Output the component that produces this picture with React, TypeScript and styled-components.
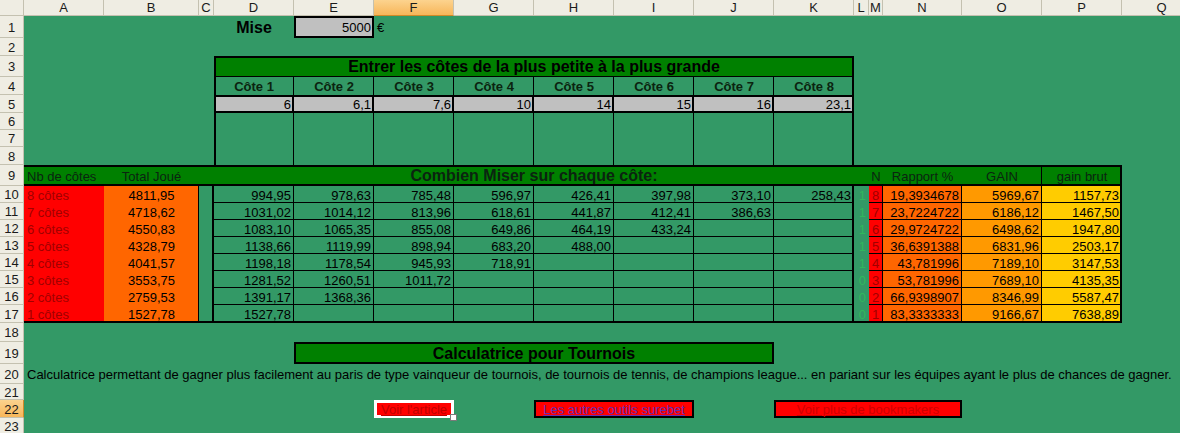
import React from 'react';
import styled, { createGlobalStyle } from 'styled-components';

const Global = createGlobalStyle`
  html, body { margin: 0; padding: 0; background: #339966; overflow: hidden; }
  body { font-family: "Liberation Sans", Arial, sans-serif; }
`;

const LETTERS = ['A','B','C','D','E','F','G','H','I','J','K','L','M','N','O','P','Q'];
const COL_W = [80, 95, 15, 80, 80, 80, 80, 80, 80, 80, 80, 15, 14, 79, 80, 80, 80];
const ROW_H = [22, 18, 21, 18, 18, 17, 17, 18, 21, 17, 17, 17, 17, 17, 17, 17, 18, 19, 22, 20, 16, 18, 17];

const colIdx = (l: string) => LETTERS.indexOf(l) + 2;

const Sheet = styled.div`
  display: grid;
  grid-template-columns: 24px ${COL_W.map((w) => `${w}px`).join(' ')};
  grid-template-rows: 16px ${ROW_H.map((h) => `${h}px`).join(' ')};
  width: 1180px;
  height: 433px;
  overflow: hidden;
  background: #339966;
`;

const HeadBase = styled.div<{ $active?: boolean }>`
  box-sizing: border-box;
  display: flex;
  align-items: center;
  justify-content: center;
  font-size: 13px;
  color: #1a1a1a;
  background: ${(p) => (p.$active ? 'linear-gradient(#fcd38e, #f7b65a)' : '#efede3')};
  border-right: 1px solid #c4c1b0;
  border-bottom: 1px solid #c4c1b0;
`;

const Corner = styled(HeadBase)`
  grid-column: 1;
  grid-row: 1;
`;

const ColHead = styled(HeadBase)<{ $col: number }>`
  grid-column: ${(p) => p.$col};
  grid-row: 1;
  border-bottom-color: ${(p) => (p.$active ? '#d08a28' : '#c4c1b0')};
`;

const RowHead = styled(HeadBase)<{ $row: number }>`
  grid-column: 1;
  grid-row: ${(p) => p.$row + 1};
  border-right-color: ${(p) => (p.$active ? '#d08a28' : '#c4c1b0')};
  padding-top: 1px;
`;

type CellProps = {
  $c: string;
  $ce?: string;
  $r: number;
  $re?: number;
  $bg?: string;
  $align?: 'left' | 'center' | 'right';
  $bold?: boolean;
  $size?: number;
  $color?: string;
  $b?: [number, number, number, number];
  $bc?: string;
  $u?: boolean;
};

const shadow = (b: [number, number, number, number] | undefined, c: string) => {
  if (!b) return 'none';
  const [t, r, bo, l] = b;
  const parts: string[] = [];
  if (t) parts.push(`inset 0 ${t}px 0 ${c}`);
  if (r) parts.push(`inset -${r}px 0 0 ${c}`);
  if (bo) parts.push(`inset 0 -${bo}px 0 ${c}`);
  if (l) parts.push(`inset ${l}px 0 0 ${c}`);
  return parts.length ? parts.join(', ') : 'none';
};

const Cell = styled.div<CellProps>`
  position: relative;
  box-sizing: border-box;
  grid-column: ${(p) => colIdx(p.$c)} / ${(p) => colIdx(p.$ce ?? p.$c) + 1};
  grid-row: ${(p) => p.$r + 1} / ${(p) => (p.$re ?? p.$r) + 2};
  display: flex;
  align-items: center;
  justify-content: ${(p) =>
    p.$align === 'right' ? 'flex-end' : p.$align === 'center' ? 'center' : 'flex-start'};
  padding: 1px 3px 0 3px;
  background: ${(p) => p.$bg ?? 'transparent'};
  box-shadow: ${(p) => shadow(p.$b, p.$bc ?? '#000')};
  font-size: ${(p) => p.$size ?? 13}px;
  font-weight: ${(p) => (p.$bold ? 700 : 400)};
  color: ${(p) => p.$color ?? '#000'};
  text-decoration: ${(p) => (p.$u ? 'underline' : 'none')};
  white-space: nowrap;
  overflow: visible;
  line-height: 1;
`;

const FillHandle = styled.span`
  position: absolute;
  right: -3px;
  bottom: -3px;
  width: 5px;
  height: 5px;
  background: #ffffff;
  border: 1px solid #7a7a7a;
`;

const GREEN = '#339966';
const DARK = '#008000';
const RED = '#ff0000';
const ORANGE = '#ff6600';
const AMBER = '#ff9900';
const YELLOW = '#ffcc00';
const GRAY = '#c0c0c0';
const DARKRED = '#a00000';
const HEAD_TXT = '#0b2410';

const cotes = ['6', '6,1', '7,6', '10', '14', '15', '16', '23,1'];
const dk = ['D', 'E', 'F', 'G', 'H', 'I', 'J', 'K'];

const rows = [
  { n: '8', tot: '4811,95', v: ['994,95', '978,63', '785,48', '596,97', '426,41', '397,98', '373,10', '258,43'], l: '1', rap: '19,3934678', gain: '5969,67', brut: '1157,73' },
  { n: '7', tot: '4718,62', v: ['1031,02', '1014,12', '813,96', '618,61', '441,87', '412,41', '386,63'], l: '1', rap: '23,7224722', gain: '6186,12', brut: '1467,50' },
  { n: '6', tot: '4550,83', v: ['1083,10', '1065,35', '855,08', '649,86', '464,19', '433,24'], l: '1', rap: '29,9724722', gain: '6498,62', brut: '1947,80' },
  { n: '5', tot: '4328,79', v: ['1138,66', '1119,99', '898,94', '683,20', '488,00'], l: '1', rap: '36,6391388', gain: '6831,96', brut: '2503,17' },
  { n: '4', tot: '4041,57', v: ['1198,18', '1178,54', '945,93', '718,91'], l: '1', rap: '43,781996', gain: '7189,10', brut: '3147,53' },
  { n: '3', tot: '3553,75', v: ['1281,52', '1260,51', '1011,72'], l: '0', rap: '53,781996', gain: '7689,10', brut: '4135,35' },
  { n: '2', tot: '2759,53', v: ['1391,17', '1368,36'], l: '0', rap: '66,9398907', gain: '8346,99', brut: '5587,47' },
  { n: '1', tot: '1527,78', v: ['1527,78'], l: '0', rap: '83,3333333', gain: '9166,67', brut: '7638,89' },
];

export default function App() {
  return (
    <>
      <Global />
      <Sheet>
        <Corner />
        {LETTERS.map((l, i) => (
          <ColHead key={l} $col={i + 2} $active={l === 'F'}>{l}</ColHead>
        ))}
        {ROW_H.map((_, i) => (
          <RowHead key={i} $row={i + 1} $active={i + 1 === 22}>{i + 1}</RowHead>
        ))}

        {/* Row 1 */}
        <Cell $c="D" $r={1} $bold $size={16} $align="center">Mise</Cell>
        <Cell $c="E" $r={1} $bg={GRAY} $b={[2, 2, 2, 2]} $align="right">5000</Cell>
        <Cell $c="F" $r={1}>€</Cell>

        {/* Entrer les côtes */}
        <Cell $c="D" $ce="K" $r={3} $bg={DARK} $bold $size={16} $align="center" $b={[2, 2, 1, 2]}>
          Entrer les côtes de la plus petite à la plus grande
        </Cell>
        {dk.map((c, i) => (
          <Cell key={`h${c}`} $c={c} $r={4} $bold $align="center" $color={HEAD_TXT} $b={[0, i === 7 ? 2 : 1, 0, i === 0 ? 2 : 0]}>
            Côte {i + 1}
          </Cell>
        ))}
        {dk.map((c, i) => (
          <Cell key={`v${c}`} $c={c} $r={5} $bg={GRAY} $align="right" $b={[2, 2, 2, i === 0 ? 2 : 0]}>
            {cotes[i]}
          </Cell>
        ))}
        {dk.map((c, i) => (
          <Cell key={`e${c}`} $c={c} $r={6} $re={8} $b={[0, i === 7 ? 2 : 1, 0, i === 0 ? 2 : 0]} />
        ))}

        {/* Row 9 header */}
        <Cell $c="A" $r={9} $bg={DARK} $color={HEAD_TXT} $b={[2, 0, 2, 0]}>Nb de côtes</Cell>
        <Cell $c="B" $r={9} $bg={DARK} $color={HEAD_TXT} $align="center" $b={[2, 0, 2, 0]}>Total Joué</Cell>
        <Cell $c="C" $r={9} $bg={DARK} $b={[2, 0, 2, 0]} />
        <Cell $c="D" $ce="K" $r={9} $bg={DARK} $bold $size={16} $align="center" $color={HEAD_TXT} $b={[2, 0, 2, 0]}>
          Combien Miser sur chaque côte:
        </Cell>
        <Cell $c="L" $r={9} $bg={DARK} $b={[2, 0, 2, 0]} />
        <Cell $c="M" $r={9} $bg={DARK} $color={HEAD_TXT} $align="center" $b={[2, 0, 2, 0]}>N</Cell>
        <Cell $c="N" $r={9} $bg={DARK} $color={HEAD_TXT} $align="center" $b={[2, 0, 2, 0]}>Rapport %</Cell>
        <Cell $c="O" $r={9} $bg={DARK} $color={HEAD_TXT} $align="center" $b={[2, 1, 2, 0]}>GAIN</Cell>
        <Cell $c="P" $r={9} $bg={DARK} $color={HEAD_TXT} $align="center" $b={[2, 2, 2, 0]}>gain brut</Cell>

        {/* Rows 10-17 */}
        {rows.map((row, i) => {
          const r = 10 + i;
          const last = i === rows.length - 1;
          const bb = last ? 2 : 1;
          return (
            <React.Fragment key={r}>
              <Cell $c="A" $r={r} $bg={RED} $color={DARKRED} $b={[0, 0, last ? 2 : 0, 0]}>{row.n} côtes</Cell>
              <Cell $c="B" $r={r} $bg={ORANGE} $align="center" $b={[0, 1, last ? 2 : 0, 0]}>{row.tot}</Cell>
              <Cell $c="C" $r={r} $b={[0, 2, last ? 2 : 0, 0]} />
              {dk.map((c, j) => (
                <Cell key={c} $c={c} $r={r} $align="right" $b={[0, j === 7 ? 2 : 1, bb, 0]}>
                  {row.v[j] ?? ''}
                </Cell>
              ))}
              <Cell $c="L" $r={r} $align="right" $color="#30b85c" $b={[0, 0, last ? 2 : 0, 0]}>{row.l}</Cell>
              <Cell $c="M" $r={r} $bg={RED} $color={DARKRED} $b={[0, 1, bb, 0]}>{row.n}</Cell>
              <Cell $c="N" $r={r} $bg={ORANGE} $align="right" $b={[0, 1, bb, 0]}>{row.rap}</Cell>
              <Cell $c="O" $r={r} $bg={AMBER} $align="right" $b={[0, 1, bb, 0]}>{row.gain}</Cell>
              <Cell $c="P" $r={r} $bg={YELLOW} $align="right" $b={[0, 2, bb, 0]}>{row.brut}</Cell>
            </React.Fragment>
          );
        })}

        {/* Row 19 */}
        <Cell $c="E" $ce="J" $r={19} $bg={DARK} $bold $size={16} $align="center" $b={[2, 2, 2, 2]}>
          Calculatrice pour Tournois
        </Cell>

        {/* Row 20 */}
        <Cell $c="A" $ce="Q" $r={20}>
          Calculatrice permettant de gagner plus facilement au paris de type vainqueur de tournois, de tournois de tennis, de champions league... en pariant sur les équipes ayant le plus de chances de gagner.
        </Cell>

        {/* Row 22 */}
        <Cell $c="F" $r={22} $bg={RED} $align="center" $color="#c00000" $u $b={[3, 3, 3, 3]} $bc="#ffffff">
          Voir l'article
          <FillHandle />
        </Cell>
        <Cell $c="H" $ce="I" $r={22} $bg={RED} $align="center" $color="#6a2bb0" $u $b={[2, 2, 2, 2]}>
          Les autres outils surebet
        </Cell>
        <Cell $c="K" $ce="N" $r={22} $bg={RED} $align="center" $color="#d00000" $u $b={[2, 2, 2, 2]}>
          Voir plus de bookmakers
        </Cell>
      </Sheet>
    </>
  );
}
